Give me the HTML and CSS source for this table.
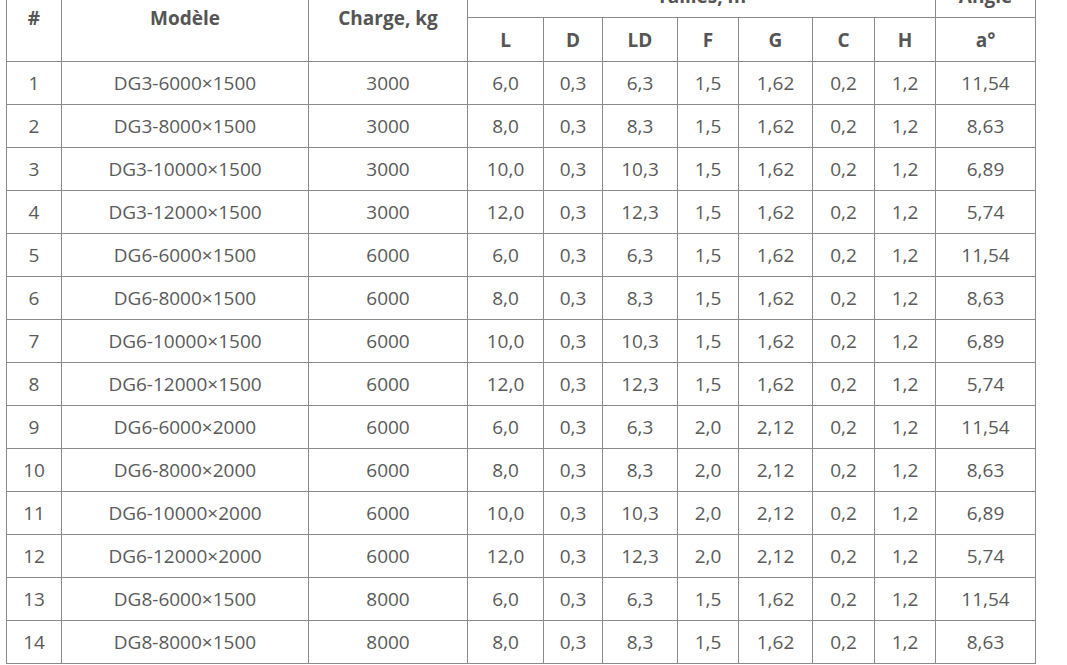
FILE: index.html
```html
<!DOCTYPE html>
<html lang="fr">
<head>
<meta charset="utf-8">
<link rel="stylesheet" href="styles.css">
</head>
<body>
<div class="page">
<table class="spec">
<colgroup>
<col class="c-num"><col class="c-model"><col class="c-charge">
<col class="c-l"><col class="c-d"><col class="c-ld"><col class="c-f"><col class="c-g"><col class="c-c"><col class="c-h"><col class="c-a">
</colgroup>
<thead>
<tr class="h1">
<th rowspan="2">#</th>
<th rowspan="2">Modèle</th>
<th rowspan="2">Charge, kg</th>
<th colspan="7">Tailles, m</th>
<th>Angle</th>
</tr>
<tr class="h2">
<th>L</th><th>D</th><th>LD</th><th>F</th><th>G</th><th>C</th><th>H</th><th>a°</th>
</tr>
</thead>
<tbody>
<tr><td>1</td><td>DG3-6000×1500</td><td>3000</td><td>6,0</td><td>0,3</td><td>6,3</td><td>1,5</td><td>1,62</td><td>0,2</td><td>1,2</td><td>11,54</td></tr>
<tr><td>2</td><td>DG3-8000×1500</td><td>3000</td><td>8,0</td><td>0,3</td><td>8,3</td><td>1,5</td><td>1,62</td><td>0,2</td><td>1,2</td><td>8,63</td></tr>
<tr><td>3</td><td>DG3-10000×1500</td><td>3000</td><td>10,0</td><td>0,3</td><td>10,3</td><td>1,5</td><td>1,62</td><td>0,2</td><td>1,2</td><td>6,89</td></tr>
<tr><td>4</td><td>DG3-12000×1500</td><td>3000</td><td>12,0</td><td>0,3</td><td>12,3</td><td>1,5</td><td>1,62</td><td>0,2</td><td>1,2</td><td>5,74</td></tr>
<tr><td>5</td><td>DG6-6000×1500</td><td>6000</td><td>6,0</td><td>0,3</td><td>6,3</td><td>1,5</td><td>1,62</td><td>0,2</td><td>1,2</td><td>11,54</td></tr>
<tr><td>6</td><td>DG6-8000×1500</td><td>6000</td><td>8,0</td><td>0,3</td><td>8,3</td><td>1,5</td><td>1,62</td><td>0,2</td><td>1,2</td><td>8,63</td></tr>
<tr><td>7</td><td>DG6-10000×1500</td><td>6000</td><td>10,0</td><td>0,3</td><td>10,3</td><td>1,5</td><td>1,62</td><td>0,2</td><td>1,2</td><td>6,89</td></tr>
<tr><td>8</td><td>DG6-12000×1500</td><td>6000</td><td>12,0</td><td>0,3</td><td>12,3</td><td>1,5</td><td>1,62</td><td>0,2</td><td>1,2</td><td>5,74</td></tr>
<tr><td>9</td><td>DG6-6000×2000</td><td>6000</td><td>6,0</td><td>0,3</td><td>6,3</td><td>2,0</td><td>2,12</td><td>0,2</td><td>1,2</td><td>11,54</td></tr>
<tr><td>10</td><td>DG6-8000×2000</td><td>6000</td><td>8,0</td><td>0,3</td><td>8,3</td><td>2,0</td><td>2,12</td><td>0,2</td><td>1,2</td><td>8,63</td></tr>
<tr><td>11</td><td>DG6-10000×2000</td><td>6000</td><td>10,0</td><td>0,3</td><td>10,3</td><td>2,0</td><td>2,12</td><td>0,2</td><td>1,2</td><td>6,89</td></tr>
<tr><td>12</td><td>DG6-12000×2000</td><td>6000</td><td>12,0</td><td>0,3</td><td>12,3</td><td>2,0</td><td>2,12</td><td>0,2</td><td>1,2</td><td>5,74</td></tr>
<tr><td>13</td><td>DG8-6000×1500</td><td>8000</td><td>6,0</td><td>0,3</td><td>6,3</td><td>1,5</td><td>1,62</td><td>0,2</td><td>1,2</td><td>11,54</td></tr>
<tr><td>14</td><td>DG8-8000×1500</td><td>8000</td><td>8,0</td><td>0,3</td><td>8,3</td><td>1,5</td><td>1,62</td><td>0,2</td><td>1,2</td><td>8,63</td></tr>
</tbody>
</table>
</div>
</body>
</html>
```

FILE: styles.css
```css
html, body {
  margin: 0;
  padding: 0;
  background: #ffffff;
  overflow: hidden;
}
body {
  font-family: "Open Sans", "Liberation Sans", sans-serif;
  color: #555555;
}
.page {
  padding-left: 6px;
  margin-top: -26px;
}
.spec {
  border-collapse: collapse;
  table-layout: fixed;
  width: 1030px;
  font-size: 19px;
}
.spec th, .spec td {
  border: 1px solid #8a8a8a;
  text-align: center;
  vertical-align: middle;
  padding: 0;
  line-height: 26px;
}
.spec th {
  font-weight: 700;
  color: #555555;
}
.spec .h1 th { height: 42px; }
.spec .h2 th { height: 43px; }
.spec tbody td { height: 42px; color: #5a5a5a; }
.c-num { width: 55px; }
.c-model { width: 247px; }
.c-charge { width: 159px; }
.c-l { width: 76px; }
.c-d { width: 59px; }
.c-ld { width: 75px; }
.c-f { width: 61px; }
.c-g { width: 74px; }
.c-c { width: 62px; }
.c-h { width: 61px; }
.c-a { width: 100px; }
```
